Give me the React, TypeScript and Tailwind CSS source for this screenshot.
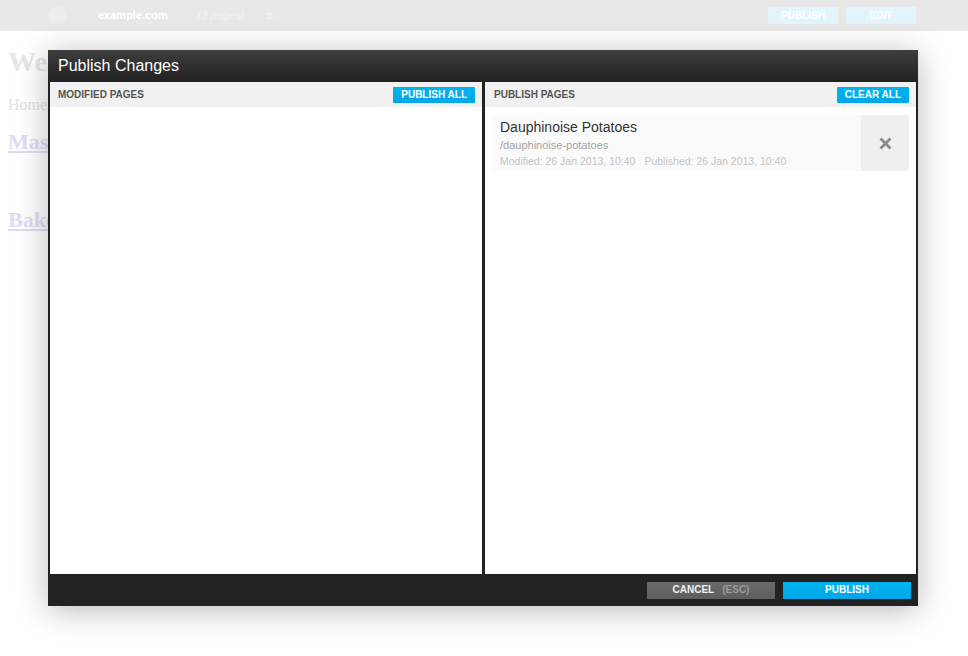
export default function App() {
  return (
    <div className="relative w-[968px] h-[656px] overflow-hidden bg-white font-['Liberation_Sans',Arial,sans-serif]">
      {/* top bar (faded under overlay) */}
      <div className="h-[31px] bg-[#e8e8e8] flex items-center">
        <div className="ml-[48px] w-[19px] h-[19px] rounded-full bg-[#ececec]" />
        <span className="ml-[31px] text-[11px] font-bold text-white leading-none">example.com</span>
        <span className="ml-[30px] text-[11px] italic text-[#f3f3f3] leading-none">(3 pages)</span>
        <svg className="ml-[21px]" width="8" height="10" viewBox="0 0 8 10">
          <path d="M4 0 L8 4 L0 4 Z" fill="#f0f0f0" />
          <path d="M0 6 L8 6 L4 10 Z" fill="#f0f0f0" />
        </svg>
        <div className="ml-auto mr-[52px] flex gap-[8px]">
          <div className="w-[70px] h-[17px] bg-[#e2f5fc] text-white text-[10px] font-bold flex items-center justify-center">PUBLISH</div>
          <div className="w-[70px] h-[17px] bg-[#e2f5fc] text-white text-[10px] font-bold flex items-center justify-center">EDIT</div>
        </div>
      </div>

      {/* faded page content */}
      <div className="px-[8px] font-['Liberation_Serif','Times_New_Roman',serif]">
        <h1 className="mt-[15px] text-[28px] leading-[32px] font-bold text-[#e6e6e6]">Welcome</h1>
        <p className="mt-[17px] text-[16px] leading-[20px] text-[#e2e2e2]">Home</p>
        <h2 className="mt-[14px] text-[22px] leading-[26px] font-bold">
          <a className="text-[#dcdcf7] underline">Mashed Potatoes</a>
        </h2>
        <h2 className="mt-[52px] text-[22px] leading-[26px] font-bold">
          <a className="text-[#dcdcf7] underline">Baked Potatoes</a>
        </h2>
      </div>

      {/* dialog */}
      <div className="absolute left-[48px] top-[50px] w-[870px] h-[556px] bg-[#222222] shadow-[0_4px_30px_rgba(0,0,0,0.28)] flex flex-col">
        <div className="h-[32px] shrink-0 bg-linear-to-b from-[#3e3e3e] to-[#222222] flex items-center px-[10px]">
          <span className="text-white text-[16px] leading-none">Publish Changes</span>
        </div>
        <div className="flex-1 flex px-[2px] gap-[3px] min-h-0">
          {/* left panel */}
          <div className="w-[432px] bg-white flex flex-col">
            <div className="h-[25px] bg-[#f1f1f1] flex items-center justify-between pl-[8px] pr-[7px]">
              <span className="text-[10px] font-bold text-[#555555] leading-none">MODIFIED PAGES</span>
              <div className="h-[16px] px-[8px] rounded-[1px] bg-linear-to-b from-[#00b4f0] to-[#00a6e8] text-white text-[10px] font-bold flex items-center leading-none">PUBLISH ALL</div>
            </div>
          </div>
          {/* right panel */}
          <div className="flex-1 bg-white flex flex-col">
            <div className="h-[25px] bg-[#f1f1f1] flex items-center justify-between pl-[9px] pr-[7px]">
              <span className="text-[10px] font-bold text-[#555555] leading-none">PUBLISH PAGES</span>
              <div className="h-[16px] px-[8px] rounded-[1px] bg-linear-to-b from-[#00b4f0] to-[#00a6e8] text-white text-[10px] font-bold flex items-center leading-none">CLEAR ALL</div>
            </div>
            <div className="mt-[8px] mx-[7px] h-[56px] bg-[#fafafa] flex rounded-[1px]">
              <div className="flex-1 pl-[8px] pt-[4px] flex flex-col">
                <div className="text-[14px] leading-[17px] text-[#333333]">Dauphinoise Potatoes</div>
                <div className="mt-[3px] text-[11px] leading-[13px] text-[#a3a3a3]">/dauphinoise-potatoes</div>
                <div className="mt-[3px] text-[10.5px] leading-[12px] text-[#c4c4c4] flex gap-[9px]">
                  <span>Modified: 26 Jan 2013, 10:40</span>
                  <span>Published: 26 Jan 2013, 10:40</span>
                </div>
              </div>
              <div className="w-[48px] bg-[#efefef] flex items-center justify-center">
                <svg width="13" height="13" viewBox="0 0 13 13">
                  <path d="M1.5 1.5 L11.5 11.5 M11.5 1.5 L1.5 11.5" stroke="#8a8a8a" strokeWidth="2.8" strokeLinecap="butt" />
                </svg>
              </div>
            </div>
          </div>
        </div>
        <div className="h-[32px] shrink-0 flex items-center justify-end gap-[8px] pr-[7px]">
          <div className="w-[128px] h-[17px] bg-linear-to-b from-[#6a6a6a] to-[#5e5e5e] flex items-center justify-center gap-[8px] text-[10px] font-bold leading-none">
            <span className="text-[#f0f0f0]">CANCEL</span>
            <span className="text-[#9a9a9a]">(ESC)</span>
          </div>
          <div className="w-[128px] h-[17px] bg-linear-to-b from-[#00b4f0] to-[#00a6e8] flex items-center justify-center text-white text-[10px] font-bold leading-none">PUBLISH</div>
        </div>
      </div>
    </div>
  );
}
